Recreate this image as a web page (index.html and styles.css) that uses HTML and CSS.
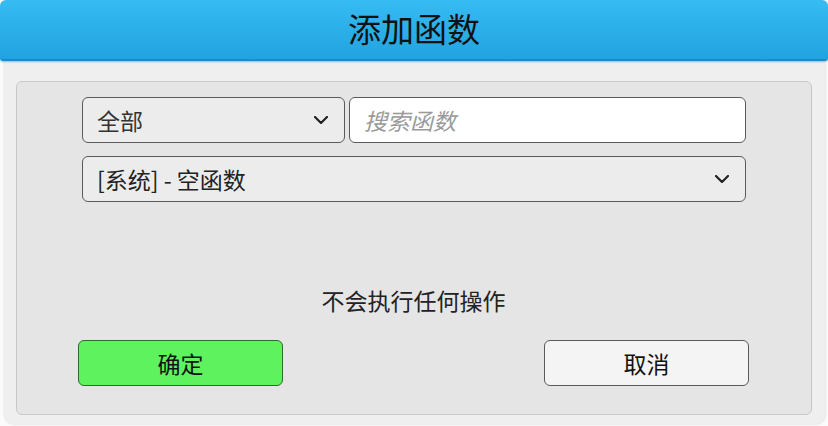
FILE: index.html
```html
<!DOCTYPE html>
<html lang="zh-CN">
<head>
    <meta charset="UTF-8">
    <meta name="viewport" content="width=device-width, initial-scale=1.0">
    <title>添加函数</title>
    <link rel="stylesheet" href="styles.css">
</head>
<body>
    <div class="dialog">
        <!-- Title bar -->
        <div class="dialog-header">添加函数</div>

        <div class="dialog-body">
            <div class="panel">
                <!-- Filters -->
                <div class="filter-row">
                    <div class="select select-category">
                        <span>全部</span>
                        <svg class="chevron" viewBox="0 0 14 8" width="14" height="8"><path d="M1 1l6 6 6-6"/></svg>
                    </div>
                    <div class="search">搜索函数</div>
                </div>
                <div class="select select-func">
                    <span>[系统] - 空函数</span>
                    <svg class="chevron" viewBox="0 0 14 8" width="14" height="8"><path d="M1 1l6 6 6-6"/></svg>
                </div>

                <p class="description">不会执行任何操作</p>

                <!-- Actions -->
                <div class="actions">
                    <button class="btn btn-ok">确定</button>
                    <button class="btn btn-cancel">取消</button>
                </div>
            </div>
        </div>
    </div>
</body>
</html>
```

FILE: styles.css
```css
/* Reset */
* {
    margin: 0;
    padding: 0;
    box-sizing: border-box;
}

:root {
    --panel-color: #e5e5e5;
    --body-color: #efefef;
    --text-color: #222;
    --border-color: #5a5a5a;
}

html, body {
    width: 828px;
    height: 426px;
    overflow: hidden;
    background-color: #fbfbfb;
    font-family: "Noto Sans CJK SC", "Noto Sans", sans-serif;
    color: var(--text-color);
}

.dialog {
    display: flex;
    flex-direction: column;
    height: 424px;
}

/* Header */
.dialog-header {
    height: 61px;
    background: linear-gradient(#36bbf3, #21a3df);
    border-bottom: 2px solid #1b8dc6;
    border-radius: 6px 6px 3px 3px;
    box-shadow: 0 1px 2px rgba(0, 0, 0, 0.25);
    display: flex;
    justify-content: center;
    align-items: center;
    font-size: 33px;
    color: #111;
    padding-bottom: 3px;
    position: relative;
    z-index: 1;
}

/* Body */
.dialog-body {
    flex: 1;
    margin: 0 3px;
    padding: 20px 13px 9px;
    background-color: var(--body-color);
    border-radius: 0 0 10px 10px;
    box-shadow: 1px 1px 2px rgba(0, 0, 0, 0.08);
}

.panel {
    height: 100%;
    background-color: var(--panel-color);
    border: 1px solid #c8c8c8;
    border-radius: 6px;
    padding: 15px 62px 0 61px;
    display: flex;
    flex-direction: column;
}

.filter-row {
    display: flex;
    gap: 4px;
    margin: 0 3px 13px 4px;
}

.select {
    height: 46px;
    border: 1px solid var(--border-color);
    border-radius: 6px;
    background-color: #ececec;
    display: flex;
    align-items: center;
    justify-content: space-between;
    padding: 0 16px 0 14px;
    font-size: 23px;
    color: #333;
}

.select-category {
    width: 263px;
}

.select-func {
    margin: 0 3px 0 4px;
    color: #222;
}

.chevron {
    fill: none;
    stroke: #222;
    stroke-width: 2.2;
    stroke-linecap: round;
    stroke-linejoin: round;
}

.search {
    flex: 1;
    height: 46px;
    border: 1px solid var(--border-color);
    border-radius: 6px;
    background-color: #fff;
    display: flex;
    align-items: center;
    padding-left: 14px;
    font-size: 23px;
    font-style: italic;
    color: #9a9a9a;
}

.description {
    margin-top: 82px;
    text-align: center;
    font-size: 23px;
    line-height: 32px;
    color: #222;
}

.actions {
    margin-top: 24px;
    display: flex;
    justify-content: space-between;
}

.btn {
    width: 205px;
    height: 46px;
    border-radius: 6px;
    font-family: inherit;
    font-size: 23px;
    color: #111;
}

.btn-ok {
    background-color: #5ef25f;
    border: 1px solid #2d6a2d;
}

.btn-cancel {
    background-color: #f4f4f4;
    border: 1px solid var(--border-color);
}
```
